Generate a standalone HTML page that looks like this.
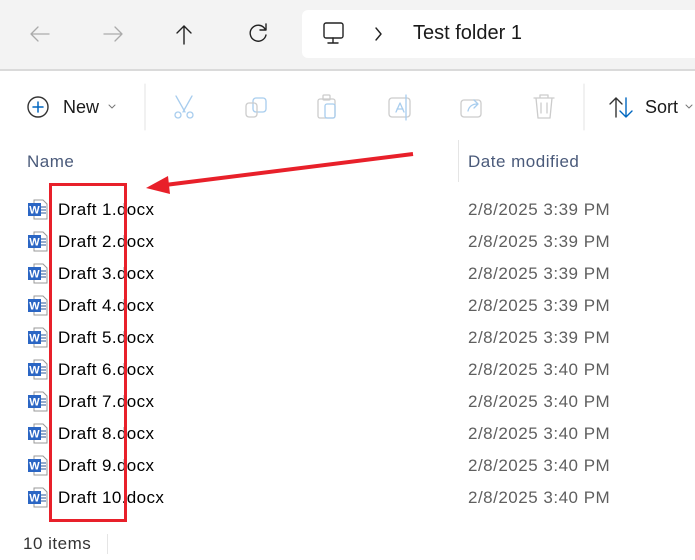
<!DOCTYPE html>
<html><head><style>
body{margin:0;width:695px;height:560px;overflow:hidden;background:#fff;font-family:"Segoe UI","Liberation Sans",sans-serif;position:relative}
.a{position:absolute}
.top{left:0;top:0;width:695px;height:69px;background:#f3f3f3;border-bottom:2px solid #dadada}
.addr{left:302px;top:10px;width:420px;height:48px;background:#fff;border-radius:6px}
.t{font-size:17px;color:#1a1a1a;white-space:nowrap}
.row{font-size:17px;color:#000;white-space:nowrap;letter-spacing:0.4px}
.dt{font-size:17px;color:#5f5f5f;white-space:nowrap;letter-spacing:0.5px}
</style></head><body>
<div class="a top"></div>
<div class="a addr"></div>
<svg class="a" style="left:0;top:0" width="695" height="140" fill="none" stroke-linecap="round" stroke-linejoin="round">
<g stroke="#aaa" stroke-width="1.3"><path d="M31 34h18M31 34l7-7M31 34l7 7"/><path d="M104 34h18M122 34l-7-7M122 34l-7 7"/></g>
<g stroke="#222" stroke-width="1.4"><path d="M184 26v18M184 26l-7 7M184 26l7 7"/>
<path d="M265 29a8 8 0 1 0 1 6M266 24v6h-6"/>
<rect x="324" y="23" width="19" height="15" rx="2"/><path d="M333 38v5M328 43h10"/>
<path d="M376 28l5 6-5 6"/></g>
<circle cx="38" cy="107" r="10" stroke="#333" stroke-width="1.4"/><path d="M38 102v10M33 107h10" stroke="#0067c0" stroke-width="1.5"/>
<path d="M109 105l3 3 3-3" stroke="#777" stroke-width="1"/>
<path d="M145 84v46M584 84v46" stroke="#e3e3e3"/>
<g stroke="#a8cdee" stroke-width="1.3"><path d="M176 96l9 16M192 96l-9 16"/><circle cx="178" cy="115" r="3"/><circle cx="190" cy="115" r="3"/>
<rect x="253" y="98" width="13" height="14" rx="3"/><rect x="246" y="103" width="11" height="14" rx="3" stroke="#ccc"/>
<rect x="318" y="99" width="17" height="19" rx="2" stroke="#ccc"/><rect x="323" y="95" width="7" height="5" rx="1" stroke="#ccc"/><rect x="325" y="104" width="10" height="14" rx="2"/>
<rect x="389" y="98" width="21" height="19" rx="3" stroke="#ccc"/><path d="M396 112l4-9 4 9M397 109h6M406 95v25"/>
<rect x="461" y="100" width="20" height="17" rx="3" stroke="#ccc"/><path d="M468 111c1-5 5-7 9-7M474 100l4 4-4 4"/>
<path d="M534 98h20M540 98v-3h8v3M536 98l2 20h12l2-20M541 103v10M547 103v10" stroke="#ccc"/></g>
<path d="M616 98v19M616 98l-6 6M616 98l6 6" stroke="#333" stroke-width="1.4"/>
<path d="M626 98v19M626 117l-6-6M626 117l6-6" stroke="#0067c0" stroke-width="1.4"/>
<path d="M686 105l3 3 3-3" stroke="#777"/>
<path d="M232 148l5-5 5 5" stroke="#888"/>
</svg>
<div class="a t" style="left:413px;top:22px;font-size:20px">Test folder 1</div>
<div class="a t" style="left:63px;top:97px;font-size:18px">New</div>
<div class="a t" style="left:645px;top:97px;font-size:18px">Sort</div>
<div class="a" style="left:458px;top:140px;width:1px;height:42px;background:#e5e5e5"></div>
<div class="a dt" style="left:27px;top:152px;color:#4a5a7a">Name</div>
<div class="a dt" style="left:468px;top:152px;color:#4a5a7a">Date modified</div>
<div id="rows"></div>
<script>
let h='';const d=['3:39','3:39','3:39','3:39','3:39','3:40','3:40','3:40','3:40','3:40'];
for(let i=0;i<10;i++){let y=200+32*i;
h+=`<svg class="a" style="left:27px;top:${y-1}px" width="22" height="22"><path d="M7 1h9l4 4v15H7z" fill="#fff" stroke="#999"/><path d="M14 8h5M14 11h5M14 14h5" stroke="#2b579a"/><rect x="1" y="4" width="13" height="13" fill="#2b66c4"/><text x="7.5" y="14.5" font-size="11" font-weight="bold" fill="#fff" text-anchor="middle" font-family="Liberation Sans">W</text></svg>`;
h+=`<div class="a row" style="left:58px;top:${y}px">Draft ${i+1}.docx</div><div class="a dt" style="left:468px;top:${y}px">2/8/2025 ${d[i]} PM</div>`;}
document.getElementById('rows').innerHTML=h;
</script>
<div class="a" style="left:49px;top:183px;width:72px;height:333px;border:3px solid #e8202a"></div>
<svg class="a" style="left:0;top:140px" width="695" height="60"><path d="M413 14L165 45" stroke="#e8202a" stroke-width="4"/><path d="M146 48l22-12 2 18z" fill="#e8202a"/></svg>
<div class="a dt" style="left:23px;top:534px;color:#333">10 items</div>
<div class="a" style="left:107px;top:534px;width:1px;height:20px;background:#e5e5e5"></div>
</body></html>
